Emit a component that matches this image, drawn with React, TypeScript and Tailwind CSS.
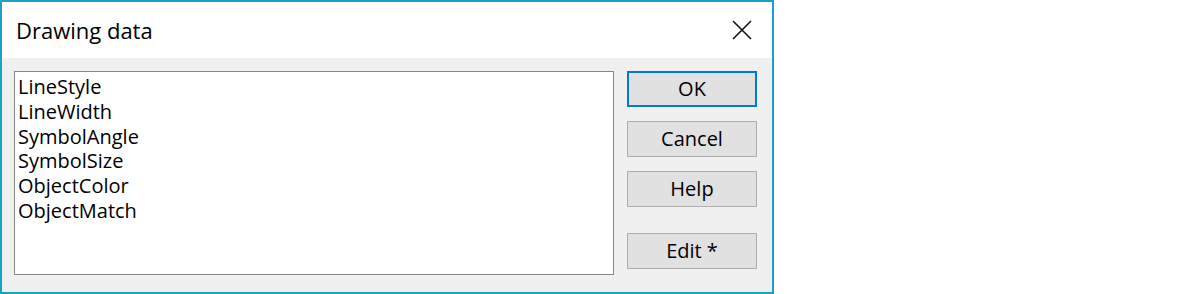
const items = ["LineStyle", "LineWidth", "SymbolAngle", "SymbolSize", "ObjectColor", "ObjectMatch"];

function DialogButton({ label, primary = false }: { label: string; primary?: boolean }) {
  return (
    <button
      className={
        primary
          ? "w-[130px] h-[36px] bg-[#e1e1e1] border-2 border-[#0078d7] text-[20px] leading-none text-black"
          : "w-[130px] h-[36px] bg-[#e1e1e1] border border-[#adadad] text-[20px] leading-none text-black"
      }
    >
      {label}
    </button>
  );
}

export default function App() {
  return (
    <div className="w-[1200px] h-[294px] bg-white font-['Open_Sans',sans-serif]">
      <div className="w-[774px] h-[294px] border-2 border-[#19a2c5] flex flex-col">
        {/* Title bar */}
        <div className="h-[56px] bg-white flex items-center justify-between pl-[14px] pr-[20px]">
          <span className="text-[22px] text-black">Drawing data</span>
          <svg width="20" height="20" viewBox="0 0 20 20" className="mb-[1px]">
            <path d="M1 1 L19 19 M19 1 L1 19" stroke="#111" strokeWidth="1.6" />
          </svg>
        </div>

        {/* Body */}
        <div className="flex-1 bg-[#f0f0f0] flex pt-[13px] pl-[12px] gap-[13px]">
          <div className="w-[600px] h-[204px] bg-white border border-[#828790] px-[3px] pt-[3px]">
            {items.map((item) => (
              <div key={item} className="h-[24.8px] leading-[24.8px] text-[20px] text-black">
                {item}
              </div>
            ))}
          </div>

          <div className="flex flex-col">
            <DialogButton label="OK" primary />
            <div className="mt-[14px]">
              <DialogButton label="Cancel" />
            </div>
            <div className="mt-[14px]">
              <DialogButton label="Help" />
            </div>
            <div className="mt-[26px]">
              <DialogButton label="Edit *" />
            </div>
          </div>
        </div>
      </div>
    </div>
  );
}
